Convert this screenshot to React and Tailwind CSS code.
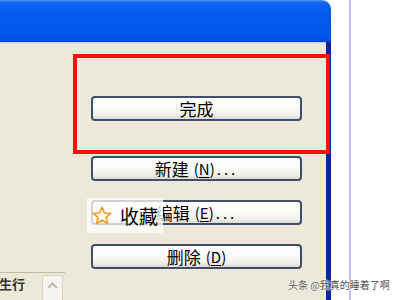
function XPButton({ children, className = "" }) {
  return (
    <div
      className={`ml-[91px] w-[211px] h-[25px] shrink-0 rounded-[4px] border-2 border-[#3f4f6b] bg-[linear-gradient(to_bottom,#ffffff_0%,#fbfbf9_45%,#f1f0ea_80%,#dcdad0_100%)] flex items-center justify-center text-[17px] leading-none text-black ${className}`}
    >
      {children}
    </div>
  );
}

function Star() {
  return (
    <svg width="20" height="19" viewBox="0 0 20 19">
      <polygon
        points="10,1.2 12.5,7 18.8,7.3 13.9,11.3 15.6,17.6 10,14.1 4.4,17.6 6.1,11.3 1.2,7.3 7.5,7"
        fill="#fffdf5"
        stroke="#f29a1f"
        strokeWidth="1.6"
        strokeLinejoin="round"
      />
    </svg>
  );
}

export default function App() {
  return (
    <div
      className="relative w-[400px] h-[300px] overflow-hidden bg-white flex"
      style={{ fontFamily: '"Noto Sans CJK SC", "Noto Sans", sans-serif' }}
    >
      {/* window */}
      <div className="w-[331px] h-full flex flex-col shrink-0">
        <div className="h-[42px] shrink-0 rounded-tr-[9px] bg-[linear-gradient(to_bottom,#4a96f7_0%,#1466f2_6%,#0a5cef_20%,#0058ee_50%,#0055ea_85%,#0047d8_100%)]" />
        <div className="flex-1 flex min-h-0">
          <div className="flex-1 bg-[#ece9d8] border-t border-[#c3cdee] flex flex-col pt-[53px]">
            <XPButton>完成</XPButton>
            <XPButton className="mt-[35px]">
              <span>新建</span>
              <span className="ml-[5px] text-[15px]">
                (<span className="underline underline-offset-2">N</span>)
              </span>
              <span className="ml-[2px] tracking-[3px] text-[15px]">...</span>
            </XPButton>
            <XPButton className="mt-[19px]">
              <span>编辑</span>
              <span className="ml-[5px] text-[15px]">
                (<span className="underline underline-offset-2">E</span>)
              </span>
              <span className="ml-[2px] tracking-[3px] text-[15px]">...</span>
            </XPButton>
            <XPButton className="mt-[19px]">
              <span>删除</span>
              <span className="ml-[5px] text-[15px]">
                (<span className="underline underline-offset-2">D</span>)
              </span>
            </XPButton>
            <div className="mt-[3px] w-[65px] border-t border-[#bdb9ab] flex items-start">
              <span className="ml-[-1px] mt-[4px] text-[13px] leading-none font-bold text-[#333]">生行</span>
              <div className="ml-[17px] mt-[2px] w-[21px] h-[28px] rounded-[2px] border border-[#d8d5ca] bg-[#f5f4ef] flex justify-center pt-[6px]">
                <svg width="11" height="7" viewBox="0 0 11 7">
                  <path d="M1 6 L5.5 1.5 L10 6" fill="none" stroke="#b8b8b8" strokeWidth="2" />
                </svg>
              </div>
            </div>
          </div>
          <div className="w-[5px] bg-[#0b24ad]" />
        </div>
      </div>

      <div className="w-[18px] shrink-0" />
      <div className="w-[2px] h-full bg-[#c4bcf6] shrink-0" />

      {/* red annotation box */}
      <div className="absolute left-[73px] top-[54px] w-[257px] h-[100px] border-4 border-[#ff0a0a]" />

      {/* favorite overlay */}
      <div className="absolute left-[87px] top-[198px] w-[76px] h-[35px] bg-white/75 flex items-center pl-[5px]">
        <Star />
        <span className="ml-[8px] text-[19px] leading-none text-black">收藏</span>
      </div>

      {/* watermark */}
      <div
        className="absolute left-[288px] top-[280px] text-[10px] leading-none text-[#555] whitespace-nowrap"
        style={{ textShadow: "0 0 2px #fff, 0 0 2px #fff, 0 0 1px #fff" }}
      >
        头条 @我真的睡着了啊
      </div>
    </div>
  );
}
